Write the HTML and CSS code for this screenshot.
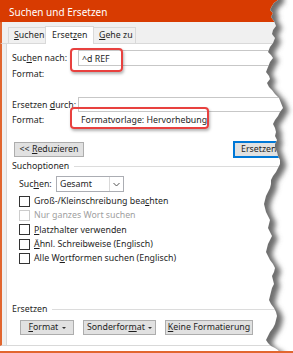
FILE: index.html
```html
<!DOCTYPE html>
<html lang="de">
<head>
  <meta charset="UTF-8" />
  <title>Suchen und Ersetzen</title>
  <link rel="stylesheet" href="styles.css">
</head>
<body>
  <div class="dialog">
    <div class="titlebar">Suchen und Ersetzen</div>
    <div class="tabs">
      <div class="tab"><u>S</u>uchen</div>
      <div class="tab active">Erset<u>z</u>en</div>
      <div class="tab"><u>G</u>ehe zu</div>
    </div>
    <div class="panel">
      <!-- Suchen nach -->
      <div class="field-row first">
        <span class="lbl">Suc<u>h</u>en nach:</span>
        <div class="input">^d REF</div>
      </div>
      <div class="format-row"><span class="lbl">Format:</span></div>

      <!-- Ersetzen durch -->
      <div class="field-row second">
        <span class="lbl">Ersetzen <u>d</u>urch:</span>
        <div class="input"></div>
      </div>
      <div class="format-row">
        <span class="lbl">Format:</span>
        <span class="fmt-value">Formatvorlage: Hervorhebung</span>
      </div>

      <div class="btn-row">
        <button class="button">&lt;&lt; <u>R</u>eduzieren</button>
        <button class="button default">Ersetzen</button>
      </div>

      <div class="group"><span>Suchoptionen</span></div>
      <div class="search-row">
        <span class="lbl">Suc<u>h</u>en:</span>
        <div class="select">
          <span class="select-value">Gesamt</span>
          <span class="select-arrow">
            <svg width="7" height="5" viewBox="0 0 7 5"><path d="M0.5 1 L3.5 4 L6.5 1" fill="none" stroke="#555" stroke-width="1"/></svg>
          </span>
        </div>
      </div>
      <div class="checks">
        <div class="check"><span class="box"></span>Groß-/Kleinschreibung bea<u>c</u>hten</div>
        <div class="check disabled"><span class="box"></span>Nur ganzes Wort suchen</div>
        <div class="check"><span class="box"></span><u>P</u>latzhalter verwenden</div>
        <div class="check"><span class="box"></span><u>Ä</u>hnl. Schreibweise (Englisch)</div>
        <div class="check"><span class="box"></span>Alle W<u>o</u>rtformen suchen (Englisch)</div>
      </div>

      <div class="group replace-group"><span>Ersetzen</span></div>
      <div class="bottom-buttons">
        <button class="button small"><u>F</u>ormat <span class="caret"></span></button>
        <button class="button small">Sonderfor<u>m</u>at <span class="caret"></span></button>
        <button class="button small"><u>K</u>eine Formatierung</button>
      </div>

      <!-- red annotations -->
      <div class="mark mark-find"></div>
      <div class="mark mark-format"></div>
    </div>

    <!-- torn paper edge on the right -->
    <svg class="torn" width="293" height="353" viewBox="0 0 293 353">
      <defs>
        <clipPath id="rightSide">
          <polygon points="278,0 274,3 272,6 270,10 273,13 271,17 274,21 276,26 273,30 272,34 275,38 273,43 270,47 268,52 271,55 273,58 270,62 268,67 266,72 269,76 270,79 267,83 269,87 272,90 275,94 279,98 281,103 283,108 280,112 278,116 275,120 273,124 275,128 276,132 275,136 277,140 275,144 275,148 277,152 278,156 280,160 280,164 278,168 276,172 273,176 271,180 271,184 270,188 268,192 266,196 265,200 264,204 265,208 266,212 268,216 270,220 269,224 268,228 270,232 272,236 270,240 268,244 267,248 266,252 268,256 270,260 273,264 275,268 274,272 272,276 273,280 274,284 272,288 271,292 270,296 269,300 271,304 274,308 276,312 277,316 276,320 275,324 273,328 270,332 268,336 266,340 268,343 271,346 275,348 278,350 280,353 293,353 293,0"/>
        </clipPath>
        <filter id="blur" x="-20%" y="-20%" width="140%" height="140%">
          <feGaussianBlur stdDeviation="2.5"/>
        </filter>
      </defs>
      <polygon points="278,0 274,3 272,6 270,10 273,13 271,17 274,21 276,26 273,30 272,34 275,38 273,43 270,47 268,52 271,55 273,58 270,62 268,67 266,72 269,76 270,79 267,83 269,87 272,90 275,94 279,98 281,103 283,108 280,112 278,116 275,120 273,124 275,128 276,132 275,136 277,140 275,144 275,148 277,152 278,156 280,160 280,164 278,168 276,172 273,176 271,180 271,184 270,188 268,192 266,196 265,200 264,204 265,208 266,212 268,216 270,220 269,224 268,228 270,232 272,236 270,240 268,244 267,248 266,252 268,256 270,260 273,264 275,268 274,272 272,276 273,280 274,284 272,288 271,292 270,296 269,300 271,304 274,308 276,312 277,316 276,320 275,324 273,328 270,332 268,336 266,340 268,343 271,346 275,348 278,350 280,353 293,353 293,0" fill="#ffffff"/>
      <g clip-path="url(#rightSide)">
        <polygon transform="translate(6,3)" filter="url(#blur)" fill="#6e6e6e"
          points="-20,-20 278,-20 278,0 274,3 272,6 270,10 273,13 271,17 274,21 276,26 273,30 272,34 275,38 273,43 270,47 268,52 271,55 273,58 270,62 268,67 266,72 269,76 270,79 267,83 269,87 272,90 275,94 279,98 281,103 283,108 280,112 278,116 275,120 273,124 275,128 276,132 275,136 277,140 275,144 275,148 277,152 278,156 280,160 280,164 278,168 276,172 273,176 271,180 271,184 270,188 268,192 266,196 265,200 264,204 265,208 266,212 268,216 270,220 269,224 268,228 270,232 272,236 270,240 268,244 267,248 266,252 268,256 270,260 273,264 275,268 274,272 272,276 273,280 274,284 272,288 271,292 270,296 269,300 271,304 274,308 276,312 277,316 276,320 275,324 273,328 270,332 268,336 266,340 268,343 271,346 275,348 278,350 280,353 280,373 -20,373"/>
      </g>
    </svg>
  </div>
</body>
</html>
```

FILE: styles.css
```css
body {
  margin: 0;
  padding: 0;
  background: #ffffff;
  font-family: 'Noto Sans', 'Open Sans', sans-serif;
  font-size: 8.8px;
  color: #1e1e1e;
}
u {
  text-decoration: underline;
  text-underline-offset: 1px;
}
.dialog {
  position: relative;
  width: 293px;
  height: 353px;
  overflow: hidden;
  border-bottom: 2px solid #e2662f;
  box-sizing: border-box;
}
.titlebar {
  height: 22px;
  line-height: 24px;
  background-color: #d83b01;
  color: #ffffff;
  font-size: 10px;
  padding-left: 7px;
  border-left: 2px solid #d83b01;
}
.tabs {
  display: flex;
  align-items: flex-end;
  height: 21px;
  background: #f0f0f0;
  padding-left: 6px;
  border-left: 2px solid #e2662f;
}
.tab {
  height: 15px;
  line-height: 15px;
  padding: 0 5px;
  width: 26px;
  border: 1px solid #d9d9d9;
  border-bottom: none;
  background: #f0f0f0;
  margin-right: -1px;
  white-space: nowrap;
}
.tab.active {
  height: 17px;
  line-height: 17px;
  width: 35px;
  background: #ffffff;
  padding: 0 6px;
  position: relative;
  z-index: 1;
  margin-bottom: -1px;
}
.tab:last-child {
  width: 31px;
}
.panel {
  position: relative;
  height: 301px;
  background: #ffffff;
  border-top: 1px solid #d9d9d9;
  border-bottom: 1px solid #d9d9d9;
  padding-left: 10px;
  box-shadow: inset 4px 0 0 #f0f0f0, inset 5px 0 0 #d9d9d9;
  border-left: 2px solid #e2662f;
}
.lbl {
  display: inline-block;
  width: 66px;
  flex: none;
  white-space: nowrap;
}
.field-row {
  display: flex;
  align-items: center;
}
.field-row.first {
  margin-top: 6px;
}
.field-row.second {
  margin-top: 16px;
}
.input {
  flex: 1;
  height: 15px;
  line-height: 15px;
  border: 1px solid #c7c7c7;
  border-right: none;
  padding-left: 3px;
  box-sizing: border-box;
}
.first .input {
  height: 16px;
  line-height: 16px;
}
.format-row {
  height: 14px;
  line-height: 14px;
  margin-top: 1px;
  display: flex;
}
.fmt-value {
  padding-left: 3px;
  white-space: nowrap;
}
.btn-row {
  display: flex;
  justify-content: space-between;
  margin-top: 15px;
  padding-left: 2px;
}
.button {
  font-family: inherit;
  font-size: 8.8px;
  color: #1e1e1e;
  background: #e1e1e1;
  border: 1px solid #adadad;
  height: 15px;
  padding: 0;
  margin: 0;
  line-height: 13px;
  white-space: nowrap;
  text-align: center;
}
.btn-row .button:first-child {
  width: 70px;
}
.button.default {
  border: 1px solid #0078d7;
  box-shadow: inset 0 0 0 1px #0078d7;
  padding: 0 0 0 7px;
  width: 60px;
  text-align: left;
  height: 17px;
  margin-top: -1px;
}
.group {
  display: flex;
  align-items: center;
  height: 14px;
  margin-top: 1px;
  white-space: nowrap;
}
.group::after {
  content: "";
  flex: 1;
  height: 1px;
  background: #dcdcdc;
  margin-left: 5px;
}
.search-row {
  display: flex;
  align-items: center;
  margin-top: 3px;
  padding-left: 7px;
}
.search-row .lbl {
  width: 37px;
}
.select {
  display: flex;
  width: 68px;
  height: 16px;
  border: 1px solid #abadb3;
  box-sizing: border-box;
}
.select-value {
  flex: 1;
  line-height: 14px;
  padding-left: 3px;
}
.select-arrow {
  width: 13px;
  border-left: 1px solid #d9d9d9;
  display: flex;
  align-items: center;
  justify-content: center;
}
.checks {
  margin-top: 2px;
  padding-left: 7px;
}
.check {
  display: flex;
  align-items: center;
  height: 14.3px;
  white-space: nowrap;
}
.box {
  width: 9px;
  height: 9px;
  border: 1px solid #333333;
  background: #ffffff;
  margin-right: 4px;
  flex: none;
}
.check.disabled {
  color: #a0a0a0;
}
.check.disabled .box {
  border-color: #cccccc;
}
.replace-group {
  margin-top: 37px;
}
.bottom-buttons {
  display: flex;
  gap: 9px;
  margin-top: 4px;
  padding-left: 8px;
}
.bottom-buttons .button:nth-child(1) {
  width: 54px;
}
.bottom-buttons .button:nth-child(2) {
  width: 73px;
}
.bottom-buttons .button:nth-child(3) {
  width: 88px;
}
.caret {
  display: inline-block;
  width: 0;
  height: 0;
  border-left: 2px solid transparent;
  border-right: 2px solid transparent;
  border-top: 2px solid #333;
  vertical-align: middle;
  margin-left: 1px;
}
.mark {
  position: absolute;
  border: 2px solid #e8413f;
  border-radius: 4px;
  box-shadow: 1px 2px 3px rgba(0, 0, 0, 0.3);
}
.mark-find {
  left: 68px;
  top: 4px;
  width: 49px;
  height: 20px;
}
.mark-format {
  left: 68px;
  top: 63px;
  width: 135px;
  height: 18px;
}
.torn {
  position: absolute;
  left: 0;
  top: 0;
}
```
